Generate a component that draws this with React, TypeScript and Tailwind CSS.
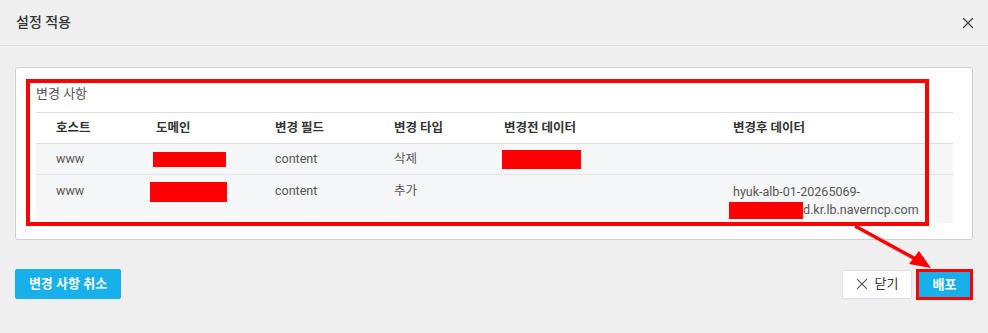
import React from 'react';
import { X } from 'lucide-react';

const FONT = { fontFamily: 'Roboto, "Noto Sans CJK KR", sans-serif' };

const Redact: React.FC<{ className?: string }> = ({ className = '' }) => (
  <span className={`inline-block bg-[#ff0000] align-middle ${className}`} />
);

const App: React.FC = () => {
  return (
    <div className="relative w-[988px] h-[333px] bg-[#efefef] text-[#333] overflow-hidden" style={FONT}>
      {/* Header */}
      <div className="h-[46px] flex items-center justify-between pl-4 pr-[11px] border-b border-[#dcdcdc]">
        <span className="text-[14px] font-medium text-[#333]">설정 적용</span>
        <X className="w-[18px] h-[18px] text-[#444]" strokeWidth={1.7} />
      </div>

      {/* Body */}
      <div className="px-[15px] pt-[21px]">
        <div className="relative bg-white border border-[#cfcfcf] rounded-[3px] pl-[20px] pr-[19px] pt-[17px] pb-[16px]">
          <div className="text-[13px] text-[#555] leading-[18px] mb-[9px]">변경 사항</div>
          <table className="w-full border-collapse text-[12.5px] table-fixed">
            <colgroup>
              <col className="w-[100px]" />
              <col className="w-[119px]" />
              <col className="w-[119px]" />
              <col className="w-[110px]" />
              <col className="w-[229px]" />
              <col />
            </colgroup>
            <thead>
              <tr className="h-[31px] border-t border-b border-[#dedede] text-left">
                {['호스트', '도메인', '변경 필드', '변경 타입', '변경전 데이터', '변경후 데이터'].map((h) => (
                  <th key={h} className="pl-5 font-bold text-[#333] text-[12.5px]">{h}</th>
                ))}
              </tr>
            </thead>
            <tbody className="text-[#555]">
              <tr className="h-[31px] bg-[#f5f6f8] border-b border-[#e2e2e2]">
                <td className="pl-5">www</td>
                <td className="pl-[17px]"><Redact className="w-[73px] h-[15px]" /></td>
                <td className="pl-5">content</td>
                <td className="pl-5">삭제</td>
                <td className="pl-[18px]"><Redact className="w-[79px] h-[19px]" /></td>
                <td className="pl-5"></td>
              </tr>
              <tr className="h-[48px] bg-[#f5f6f8] align-top">
                <td className="pl-5 pt-[7px]">www</td>
                <td className="pl-[14px] pt-[7px]"><Redact className="w-[77px] h-[20px] align-top" /></td>
                <td className="pl-5 pt-[7px]">content</td>
                <td className="pl-5 pt-[7px]">추가</td>
                <td className="pl-5 pt-[7px]"></td>
                <td className="pl-5 pt-[8px] leading-[18px]">
                  <div>hyuk-alb-01-20265069-</div>
                  <div className="flex items-center -ml-1">
                    <Redact className="w-[74px] h-[17px]" />
                    <span>d.kr.lb.naverncp.com</span>
                  </div>
                </td>
              </tr>
            </tbody>
          </table>
        </div>
      </div>

      {/* Footer */}
      <div className="flex items-center justify-between px-[15px] pt-[29px]">
        <button className="h-[30px] w-[106px] rounded-[2px] bg-[#17b0ea] text-white text-[13px] font-bold">
          변경 사항 취소
        </button>
        <div className="flex items-center gap-[4px]">
          <button className="h-[29px] w-[70px] flex items-center justify-center gap-[4px] bg-white border border-[#e2e2e2] rounded-[2px] text-[13px] text-[#333]">
            <X className="w-[18px] h-[18px] -ml-[3px]" strokeWidth={1.4} />
            <span>닫기</span>
          </button>
          <div className="border-[3px] border-[#ff0000]">
            <button className="h-[25px] w-[51px] bg-[#17b0ea] text-white text-[13px] font-bold">배포</button>
          </div>
        </div>
      </div>

      {/* Annotation overlays */}
      <div className="absolute left-[26px] top-[79px] w-[903px] h-[147px] border-[4px] border-[#ff0000] pointer-events-none" />
      <svg className="absolute left-0 top-0 pointer-events-none" width="988" height="333">
        <line x1="855" y1="226" x2="921" y2="262" stroke="#ff0000" strokeWidth="3.5" />
        <polygon points="931,268 909,264 919,251" fill="#ff0000" />
      </svg>
    </div>
  );
};

export default App;
